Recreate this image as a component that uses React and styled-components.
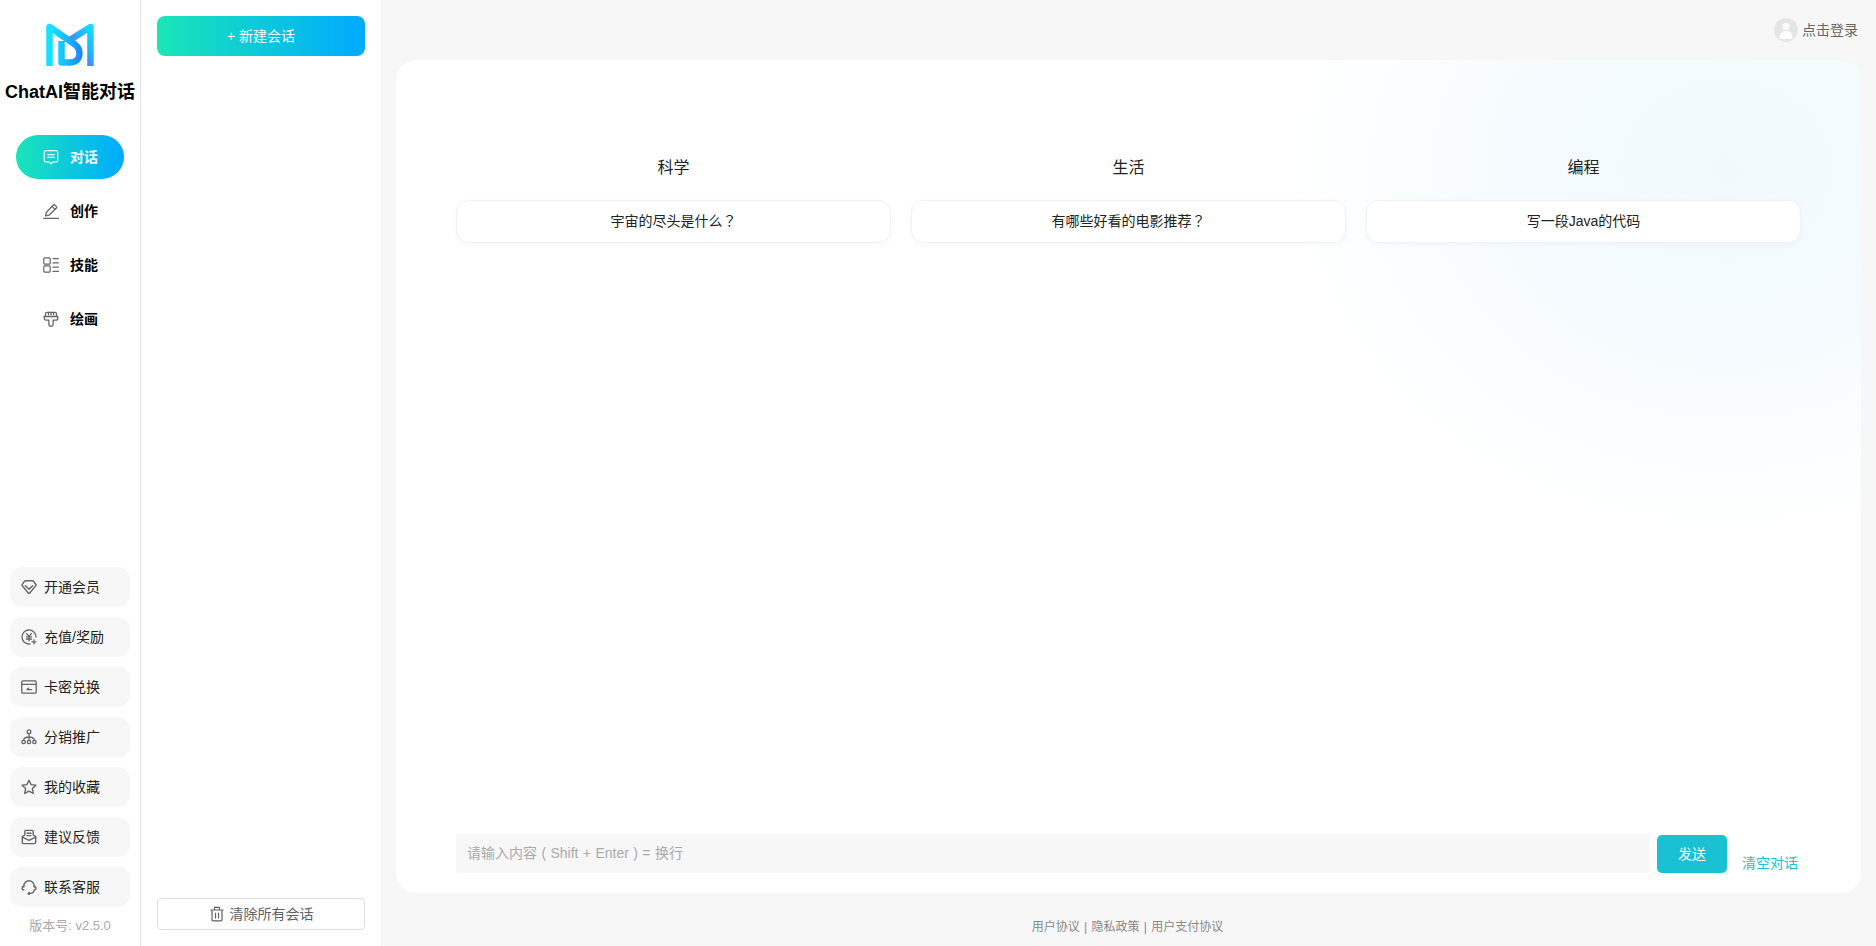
import React from "react";
import styled, { createGlobalStyle, css } from "styled-components";

const Global = createGlobalStyle`
  html, body { margin: 0; padding: 0; height: 100%; }
  body { font-family: "Liberation Sans", "Noto Sans CJK SC", sans-serif; font-size: 14px; color: #333; background: #f7f7f7; }
  * { box-sizing: border-box; }
`;

const gradient = css`background: linear-gradient(90deg, #19e6b7 0%, #00aaff 100%);`;

const Page = styled.div`
  display: grid;
  grid-template-columns: 141px 240px 1fr;
  width: 100%;
  height: 946px;
  overflow: hidden;
`;

const NavRail = styled.aside`
  display: flex;
  flex-direction: column;
  align-items: center;
  background: #fff;
  border-right: 1px solid #e3e4ea;
  padding-top: 23px;
`;

const Logo = styled.svg`
  width: 48px;
  height: 43px;
  display: block;
  flex: none;
`;

const Brand = styled.div`
  margin-top: 13px;
  font-size: 18px;
  line-height: 26px;
  font-weight: 700;
  color: #000;
  white-space: nowrap;
`;

const NavList = styled.nav`
  margin-top: 30px;
  display: flex;
  flex-direction: column;
  gap: 10px;
`;

const NavItem = styled.a`
  width: 108px;
  height: 44px;
  border-radius: 22px;
  display: flex;
  align-items: center;
  justify-content: center;
  gap: 11px;
  padding-left: 1px;
  font-size: 14px;
  font-weight: 700;
  color: ${p => (p.$active ? "#fff" : "#000")};
  ${p => p.$active && gradient}
  svg { color: ${p => (p.$active ? "#fff" : "#666")}; }
`;

const Label = styled.span`
  margin-bottom: 2px;
`;

const ToolList = styled.div`
  margin-top: auto;
  display: flex;
  flex-direction: column;
  gap: 10px;
`;

const ToolItem = styled.a`
  width: 120px;
  height: 40px;
  border-radius: 12px;
  background: #f7f7f7;
  display: flex;
  align-items: center;
  gap: 7px;
  padding-left: 11px;
  font-size: 14px;
  color: #222;
  svg { color: #666; flex: none; }
`;

const Version = styled.div`
  margin: 10px 0 11px;
  line-height: 18px;
  font-size: 13px;
  color: #aaa;
`;

const SessionPanel = styled.aside`
  background: #fff;
  display: flex;
  flex-direction: column;
  justify-content: space-between;
  padding: 16px 16px 16px;
`;

const NewButton = styled.button`
  ${gradient}
  width: 208px;
  height: 40px;
  border: 0;
  border-radius: 8px;
  padding: 0 0 2px;
  color: #fff;
  font: inherit;
  font-size: 14px;
`;

const ClearAll = styled.button`
  width: 208px;
  height: 32px;
  background: #fff;
  border: 1px solid #dcdfe6;
  border-radius: 4px;
  color: #606266;
  font: inherit;
  font-size: 14px;
  display: flex;
  align-items: center;
  justify-content: center;
  gap: 5px;
`;

const Main = styled.main`
  display: flex;
  flex-direction: column;
  min-width: 0;
`;

const TopBar = styled.header`
  height: 60px;
  flex: none;
  display: flex;
  justify-content: flex-end;
  align-items: center;
  gap: 4px;
  padding-right: 18px;
  color: #666;
  font-size: 14px;
`;

const Avatar = styled.span`
  width: 24px;
  height: 24px;
  border-radius: 50%;
  background: #e5e5e5;
  display: flex;
  align-items: center;
  justify-content: center;
  overflow: hidden;
`;

const ChatCard = styled.section`
  flex: 1;
  margin: 0 15px;
  border-radius: 20px;
  padding: 0 60px 20px;
  display: flex;
  flex-direction: column;
  justify-content: space-between;
  background: radial-gradient(ellipse 440px 370px at 1330px 110px, rgba(240, 249, 253, 0.9) 0%, rgba(240, 249, 253, 0.65) 50%, rgba(255, 255, 255, 0) 100%), #fff;
`;

const Columns = styled.div`
  display: grid;
  grid-template-columns: repeat(3, 1fr);
  gap: 20px;
  padding-top: 96px;
`;

const Column = styled.div`
  display: flex;
  flex-direction: column;
`;

const ColumnTitle = styled.h3`
  margin: 0 0 21px;
  height: 23px;
  line-height: 23px;
  text-align: center;
  font-size: 16px;
  font-weight: 400;
  color: #222;
`;

const Prompt = styled.button`
  height: 43px;
  padding: 0 0 3px;
  background: #fff;
  border: 1px solid #f0f2f5;
  border-radius: 12px;
  box-shadow: 0 2px 6px rgba(0, 20, 40, 0.03);
  font: inherit;
  font-size: 14px;
  color: #222;
`;

const Mark = styled.span`
  font-family: "Noto Sans CJK TC", sans-serif;
`;

const Composer = styled.div`
  display: flex;
  align-items: flex-end;
`;

const Input = styled.input`
  flex: 1;
  min-width: 0;
  height: 39px;
  border: 0;
  outline: 0;
  border-radius: 2px;
  background: #f7f7f7;
  padding: 0 11px 2px;
  font: inherit;
  font-size: 14px;
  word-spacing: 0.5px;
  color: #333;
  &::placeholder { color: #aaa; opacity: 1; }
`;

const Send = styled.button`
  margin-left: 8px;
  width: 70px;
  height: 38px;
  border: 0;
  border-radius: 5px;
  padding: 0 0 2px;
  background: #19c1d3;
  color: #fff;
  font: inherit;
  font-size: 14px;
`;

const ClearLink = styled.a`
  margin: 0 3px 0 15px;
  line-height: 18px;
  padding-bottom: 1px;
  font-size: 14px;
  color: #19c1d3;
`;

const Footer = styled.footer`
  height: 53px;
  flex: none;
  display: flex;
  align-items: flex-end;
  justify-content: center;
  padding: 0 2px 11px 0;
  font-size: 12px;
  line-height: 16px;
  word-spacing: 1px;
  color: #888;
`;

const Icon = ({ children, fill = "none", width = 1.3 }) => (
  <svg width={16} height={16} viewBox="0 0 16 16" fill={fill} stroke="currentColor" strokeWidth={width} strokeLinecap="round" strokeLinejoin="round">
    {children}
  </svg>
);

const icons = {
  chat: <Icon width={1.2}><path d="M2.800 1.600h10.400a1.500 1.500 0 0 1 1.500 1.500v8.400a1.500 1.500 0 0 1-1.500 1.500H9.800L8 14.800l-1.800-1.800H2.800a1.500 1.500 0 0 1-1.500-1.500V3.100a1.500 1.500 0 0 1 1.500-1.500z" /><path d="M4.800 5.600h6.400M4.800 8.400h6.400" /></Icon>,
  pen: <Icon><path d="M.8 15.300h14.800" /><path d="M2.600 12.800l.7-3.300L10.400 2a1 1 0 0 1 1.400 0l1.600 1.600a1 1 0 0 1 0 1.400L6 12.200z" /><path d="M9 3.400l3 3" /></Icon>,
  skill: <Icon width={1.2}><rect x=".8" y=".8" width="6.400" height="6.400" rx="1" /><rect x=".8" y="8.800" width="6.400" height="6.400" rx="1" /><path d="M10 1.600h5.400M10 5.800h5.400M10 10.200h5.400M10 14.400h5.400" /></Icon>,
  brush: <Icon><path d="M2.500 5.500V2.800A1.500 1.500 0 0 1 4 1.300h8a1.500 1.500 0 0 1 1.500 1.500v2.700" /><path d="M5.500 1.500v2.300M8 1.500v2.300M10.500 1.500v2.300" /><path d="M1.200 5.500h13.600v1.700a2 2 0 0 1-2 2h-2.700v4a2.100 2.100 0 0 1-4.200 0v-4H3.200a2 2 0 0 1-2-2z" /></Icon>,
  gem: <Icon width={1.5}><path d="M4.800 1.800h6.400a2 2 0 0 1 1.600.800l1.900 2.700a1.300 1.300 0 0 1-.1 1.600L8.800 14a1.100 1.100 0 0 1-1.600 0L1.400 6.900a1.300 1.300 0 0 1-.1-1.600l1.900-2.700a2 2 0 0 1 1.600-.8z" /><path d="M4.400 6.800L8 10.300l3.600-3.500" /></Icon>,
  yen: <Icon><path d="M15 8a7 7 0 1 0-6 6.900" /><path d="M5.600 4.600L8 7.400l2.400-2.800M5.400 7.800h5.200M5.400 10h5.200M8 7.400v4.400" /><path d="M13 10.800v4M11 12.800h4" /></Icon>,
  card: <Icon><rect x=".8" y="1.800" width="14.400" height="12.400" rx="1" /><path d="M.8 5.300h14.400" /><path d="M6 10.600h4.600M6 10.600l1.600-1.400" /></Icon>,
  tree: <Icon><circle cx="8" cy="2.800" r="1.900" /><circle cx="2.600" cy="13" r="1.700" /><circle cx="8" cy="13" r="1.700" /><circle cx="13.400" cy="13" r="1.700" /><path d="M8 4.800v6.400M8 8c-3.200 0-5.200.6-5.400 3.200M8 8c3.200 0 5.200.6 5.400 3.200" /></Icon>,
  star: <Icon width={1.4}><path d="M8 1.300l2.100 4.300 4.800.7-3.500 3.300.9 4.800L8 12.100l-4.300 2.300.9-4.800L1.100 6.300l4.800-.7z" /></Icon>,
  mail: <Icon width={1.4}><path d="M1.300 7.600L3.800 6V2.400a1 1 0 0 1 1-1h6.400a1 1 0 0 1 1 1V6l2.500 1.600V13a1.600 1.600 0 0 1-1.600 1.600H2.900A1.600 1.600 0 0 1 1.300 13z" /><path d="M1.300 8.200L8 11.400l6.700-3.200" /><path d="M6 4.200h4M6 6.600h4" /></Icon>,
  head: <Icon width={1.4}><path d="M2.800 8V7a5.200 5.200 0 0 1 10.400 0v1" /><path d="M2.800 6.800C1.600 7.400 1 8.200 1 9.200s.6 1.600 1.800 1.800M13.200 7c1.200.5 1.800 1.300 1.800 2.200s-.6 1.600-1.800 1.800c-.2 2-1.800 3.400-4.200 3.400" /><circle cx="8" cy="14.400" r=".8" fill="currentColor" /></Icon>,
  trash: <Icon width={1.2}><path d="M3 4.500v9.300a1 1 0 0 0 1 1h8a1 1 0 0 0 1-1V4.500" /><path d="M1.800 4h12.400M5.500 3.800V1.300h5v2.500M6.500 7v5M9.500 7v5" /></Icon>,
};

const topNav = [["chat", "对话", true], ["pen", "创作"], ["skill", "技能"], ["brush", "绘画"]];
const tools = [["gem", "开通会员"], ["yen", "充值/奖励"], ["card", "卡密兑换"], ["tree", "分销推广"], ["star", "我的收藏"], ["mail", "建议反馈"], ["head", "联系客服"]];
const topics = [
  ["科学", <>宇宙的尽头是什么<Mark>？</Mark></>],
  ["生活", <>有哪些好看的电影推荐<Mark>？</Mark></>],
  ["编程", "写一段Java的代码"],
];

export default function App() {
  return (
    <>
      <Global />
      <Page>
        <NavRail>
          <Logo viewBox="0 0 48 43" fill="none">
            <defs>
              <linearGradient id="lg1" gradientUnits="userSpaceOnUse" x1="6" y1="0" x2="36" y2="0">
                <stop offset="0" stopColor="#14e2ff" />
                <stop offset="0.35" stopColor="#18c4ff" />
                <stop offset="1" stopColor="#1a86ff" />
              </linearGradient>
              <linearGradient id="lg2" gradientUnits="userSpaceOnUse" x1="44" y1="0" x2="21" y2="14">
                <stop offset="0" stopColor="#15e0ff" />
                <stop offset="0.55" stopColor="#1fb4ff" />
                <stop offset="1" stopColor="#6a6cf5" />
              </linearGradient>
            </defs>
            <path d="M44.500 43V4L23 17.500" stroke="url(#lg2)" strokeWidth="6.500" strokeLinejoin="round" />
            <path d="M3.500 43V4L29 21.500C36 27 35 39.500 24 39.500H15.500V18" stroke="url(#lg1)" strokeWidth="6.500" strokeLinejoin="round" />
          </Logo>
          <Brand>ChatAI智能对话</Brand>
          <NavList>
            {topNav.map(([icon, label, active]) => (
              <NavItem key={label} $active={active}>{icons[icon]}<Label>{label}</Label></NavItem>
            ))}
          </NavList>
          <ToolList>
            {tools.map(([icon, label]) => (
              <ToolItem key={label}>{icons[icon]}<Label>{label}</Label></ToolItem>
            ))}
          </ToolList>
          <Version>版本号: v2.5.0</Version>
        </NavRail>
        <SessionPanel>
          <NewButton>+ 新建会话</NewButton>
          <ClearAll>{icons.trash}<Label>清除所有会话</Label></ClearAll>
        </SessionPanel>
        <Main>
          <TopBar>
            <Avatar>
              <svg width="24" height="24" viewBox="0 0 24 24" fill="#fff"><circle cx="12" cy="8.500" r="3.500" /><path d="M5.500 21c0-6 2-8 6.500-8s6.500 2 6.500 8z" /></svg>
            </Avatar>
            <Label>点击登录</Label>
          </TopBar>
          <ChatCard>
            <Columns>
              {topics.map(([title, prompt]) => (
                <Column key={title}>
                  <ColumnTitle>{title}</ColumnTitle>
                  <Prompt>{prompt}</Prompt>
                </Column>
              ))}
            </Columns>
            <Composer>
              <Input placeholder="请输入内容 ( Shift + Enter ) = 换行" />
              <Send>发送</Send>
              <ClearLink>清空对话</ClearLink>
            </Composer>
          </ChatCard>
          <Footer>用户协议 | 隐私政策 | 用户支付协议</Footer>
        </Main>
      </Page>
    </>
  );
}
